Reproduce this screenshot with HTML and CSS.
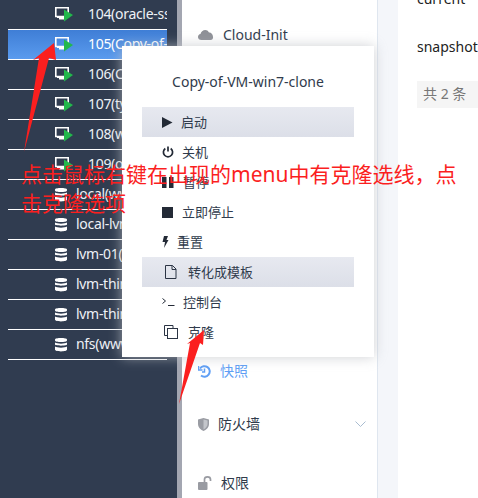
FILE: index.html
```html
<!DOCTYPE html>
<html lang="zh-CN">
<head>
    <meta charset="UTF-8">
    <meta name="viewport" content="width=device-width, initial-scale=1.0">
    <title>Copy-of-VM-win7-clone</title>
    <link rel="stylesheet" href="styles.css">
</head>
<body>
    <svg class="defs" width="0" height="0">
        <symbol id="vm" viewBox="0 0 18 15">
            <path d="M0.8 0.8H13.2V9.5H0.8Z" fill="none" stroke="#fff" stroke-width="1.6"/>
            <path d="M2 9.5H9V12.5H4V11H2Z" fill="#fff"/>
            <path d="M9 2.5L18 8L9 14.5Z" fill="#22b84c"/>
        </symbol>
        <symbol id="db" viewBox="0 0 12 15">
            <path d="M0 2.5C0 .5 12 .5 12 2.5V3.5C12 5.5 0 5.5 0 3.5Z M0 5.5C2 7 10 7 12 5.5V7.5C12 9 0 9 0 7.5Z M0 9.5C2 11 10 11 12 9.5V12.5C12 15 0 15 0 12.5Z" fill="#fff"/>
        </symbol>
    </svg>

    <div class="sidebar">
        <div class="row"><svg class="vm-icon"><use href="#vm"/></svg><span>104(oracle-ssh)</span></div>
        <div class="row selected"><svg class="vm-icon"><use href="#vm"/></svg><span>105(Copy-of-VM)</span></div>
        <div class="row"><svg class="vm-icon"><use href="#vm"/></svg><span>106(Copy-of)</span></div>
        <div class="row"><svg class="vm-icon"><use href="#vm"/></svg><span>107(tyun)</span></div>
        <div class="row"><svg class="vm-icon"><use href="#vm"/></svg><span>108(win7)</span></div>
        <div class="row"><svg class="vm-icon"><use href="#vm"/></svg><span>109(oracle)</span></div>
        <div class="row"><svg class="db-icon"><use href="#db"/></svg><span>local(www)</span></div>
        <div class="row"><svg class="db-icon"><use href="#db"/></svg><span>local-lvm(www)</span></div>
        <div class="row"><svg class="db-icon"><use href="#db"/></svg><span>lvm-01(www)</span></div>
        <div class="row"><svg class="db-icon"><use href="#db"/></svg><span>lvm-thin(www)</span></div>
        <div class="row"><svg class="db-icon"><use href="#db"/></svg><span>lvm-thin(www)</span></div>
        <div class="row"><svg class="db-icon"><use href="#db"/></svg><span>nfs(www)</span></div>
    </div>
    <div class="divider"></div>

    <div class="nav">
        <div class="nav-item nav-cloud">
            <svg width="16" height="11" viewBox="0 0 16 11"><path d="M3.5 11C-1 11-1 5.500 2.500 5C3 1 9 -1 11 3.500C15 3 17 11 12.500 11Z" fill="#8e9097"/></svg>
            <span>Cloud-Init</span>
        </div>
        <div class="nav-item nav-snapshot active">
            <svg width="13" height="13" viewBox="0 0 13 13" fill="none" stroke="#5f9ff5" stroke-width="2"><path d="M2 3.500A5.300 5.300 0 1 1 3 10.500"/><path d="M0.500 1V5H4.500" stroke-width="1.500"/><path d="M6.500 3.500V7H4" stroke-width="1.500"/></svg>
            <span class="cjk">快照</span>
        </div>
        <div class="nav-item nav-firewall">
            <svg width="11" height="13" viewBox="0 0 11 13"><path d="M0 1.500L5.500 0L11 1.500V6C11 9.500 8 12 5.500 13C3 12 0 9.500 0 6Z" fill="#9a9ca3"/><path d="M5.500 1.500L9.500 2.500V6C9.500 8.500 7.500 10.500 5.500 11.500Z" fill="#c4c6cb"/></svg>
            <span class="cjk">防火墙</span>
            <svg class="chevron" width="11" height="6" viewBox="0 0 11 6" fill="none" stroke="#a9bcd0"><path d="M.5 .5L5.500 5.500L10.500 .5"/></svg>
        </div>
        <div class="nav-item nav-perm">
            <svg width="14" height="14" viewBox="0 0 14 14"><rect x="0" y="6" width="9.500" height="8" rx="1" fill="#999ba2"/><path d="M6.500 6V3.500C6.500 0 12.500 0 12.500 3.500V5" fill="none" stroke="#999ba2" stroke-width="1.700"/></svg>
            <span class="cjk">权限</span>
        </div>
    </div>

    <div class="gutter"></div>

    <div class="content">
        <p class="name current">current</p>
        <p class="name">snapshot</p>
        <div class="total">共 2 条</div>
    </div>

    <div class="menu">
        <div class="menu-title">Copy-of-VM-win7-clone</div>
        <div class="menu-item hl">
            <svg width="11" height="11" viewBox="0 0 11 11"><path d="M0 0L10.500 5.500L0 11Z" fill="#232a36"/></svg>
            <span>启动</span>
        </div>
        <div class="menu-item">
            <svg width="12" height="12" viewBox="0 0 12 12" fill="none" stroke="#232a36" stroke-width="1.700"><path d="M3.300 2.500A4.600 4.600 0 1 0 8.700 2.500"/><path d="M6 .5V5.500"/></svg>
            <span>关机</span>
        </div>
        <div class="menu-item">
            <svg width="13" height="11" viewBox="0 0 13 11"><path d="M0 0H4.500V11H0Z M7 0H11.500V11H7Z" fill="#232a36"/></svg>
            <span>暂停</span>
        </div>
        <div class="menu-item">
            <svg width="12" height="11" viewBox="0 0 12 11"><rect width="11" height="11" fill="#232a36"/></svg>
            <span>立即停止</span>
        </div>
        <div class="menu-item">
            <svg width="7" height="12" viewBox="0 0 7 12"><path d="M2 0H6L4.500 4H6.500L2 12L3 6H.5Z" fill="#232a36"/></svg>
            <span>重置</span>
        </div>
        <div class="menu-item hl">
            <svg width="18" height="14" viewBox="0 0 18 14" fill="none" stroke="#2b3444"><path d="M3.500 .5H10.500L14 4V13.500H3.500Z"/><path d="M10 .5V4.500H14"/></svg>
            <span>转化成模板</span>
        </div>
        <div class="menu-item">
            <svg width="13" height="10" viewBox="0 0 13 10" fill="none" stroke="#232a36"><path d="M.5 1.500L3.500 4L.5 6.500"/><path d="M6 8.500H12.500"/></svg>
            <span>控制台</span>
        </div>
        <div class="menu-item">
            <svg width="18" height="14" viewBox="0 0 18 14" fill="none" stroke="#2b3444"><path d="M7 10.500H2.500V.5H11V3.500"/><rect x="5.500" y="3.500" width="10" height="10" fill="#fff"/></svg>
            <span>克隆</span>
        </div>
    </div>

    <svg class="arrows" width="478" height="498" viewBox="0 0 478 498">
        <path d="M54 43L56 60L49 58L24 152L39 58L33 60Z" fill="#fb1f1f"/>
        <path d="M204 330L203 345L200 343L179 404L190 343L187 344Z" fill="#fb1f1f"/>
    </svg>

    <div class="note">点击鼠标右键在出现的menu中有克隆选线，点<br>击克隆选项</div>
</body>
</html>
```

FILE: styles.css
```css
* {
    box-sizing: border-box;
}

html, body {
    height: 100%;
}

body {
    margin: 0;
    display: flex;
    position: relative;
    overflow: hidden;
    background-color: #f4f6fa;
    color: #303b4c;
    font-family: "Noto Sans", "Noto Sans CJK SC", sans-serif;
    font-size: 14px;
}

.defs {
    position: absolute;
}

.sidebar {
    width: 177px;
    flex: none;
    padding: 0 10px 0 8px;
    background-color: #303c50;
}

.row {
    height: 30px;
    display: flex;
    align-items: center;
    padding-left: 47px;
    border-bottom: 1px solid #fff;
    color: #eef1f6;
    letter-spacing: -0.3px;
    white-space: nowrap;
    overflow: hidden;
}

.row span {
    margin-bottom: 2px;
}

.selected {
    background: linear-gradient(#3f7ed6, #5a9bee);
    color: #fff;
}

.vm-icon {
    width: 18px;
    height: 15px;
    flex: none;
    margin-right: 15px;
}

.db-icon {
    width: 12px;
    height: 15px;
    flex: none;
    margin-right: 9px;
}

.divider {
    width: 5px;
    flex: none;
    background-color: #a3a6b1;
}

.nav {
    width: 196px;
    flex: none;
    background-color: #fff;
    border-right: 1px solid #dfe6ef;
}

.nav-item {
    display: flex;
    align-items: center;
    gap: 9px;
    height: 20px;
    padding: 0 11px 0 16px;
}

.nav-item .cjk {
    margin-bottom: 2px;
}

.nav-cloud {
    margin-top: 24px;
}

.nav-snapshot {
    margin-top: 317px;
}

.nav-firewall {
    margin-top: 33px;
}

.nav-perm {
    margin-top: 39px;
}

.active {
    color: #5f9ff5;
}

.chevron {
    margin-left: auto;
}

.gutter {
    width: 20px;
    flex: none;
}

.content {
    flex: 1;
    background-color: #fff;
    padding-left: 19px;
    overflow: hidden;
    white-space: nowrap;
}

.name {
    margin: 0 0 28px;
    line-height: 20px;
    color: #222;
}

.current {
    margin-top: -11px;
}

.total {
    margin-top: -4px;
    height: 27px;
    line-height: 25px;
    padding-left: 6px;
    background-color: #f5f5f5;
    color: #777;
}

.menu {
    position: absolute;
    left: 122px;
    top: 46px;
    width: 252px;
    height: 311px;
    padding: 0 20px;
    background-color: #fff;
    box-shadow: 0 0 12px rgba(190, 192, 198, 0.75);
}

.menu-title {
    height: 61px;
    padding-top: 26px;
    line-height: 20px;
    text-align: center;
}

.menu-item {
    display: flex;
    align-items: center;
    gap: 8px;
    height: 30px;
    padding-left: 20px;
    font-size: 13px;
}

.menu-item span {
    margin-bottom: 2px;
}

.hl {
    background: linear-gradient(#e7e9f0, #dcdfe8);
}

.arrows {
    position: absolute;
    left: 0;
    top: 0;
}

.note {
    position: absolute;
    left: 21px;
    top: 160px;
    width: 450px;
    color: #fb1f1f;
    font-size: 21px;
    line-height: 29px;
    white-space: nowrap;
}
```
